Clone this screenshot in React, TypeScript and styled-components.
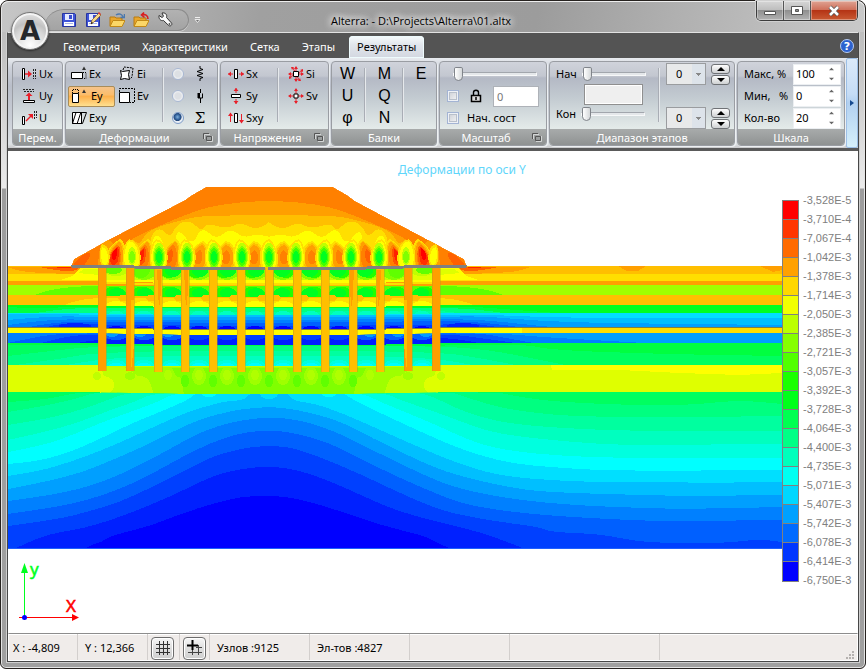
import React from "react";
import styled, { createGlobalStyle, css } from "styled-components";

const UI_FONT = `"Noto Sans", "Open Sans", sans-serif`;

const GlobalStyle = createGlobalStyle`
  *, *::before, *::after { box-sizing: border-box; }
  body { margin: 0; background: #fff; }
  button, input, select { font: inherit; color: inherit; margin: 0; }
`;

/* ---------- window frame ---------- */

const Frame = styled.div`
  display: flex;
  flex-direction: column;
  min-height: 100vh;
  border: 1px solid #26221f;
  border-radius: 8px 8px 6px 6px;
  box-shadow: inset 0 0 0 1px #e4e4e4;
  background: linear-gradient(
    180deg,
    #b9b9b9 0,
    #c4c4c4 60px,
    #d9d9d9 130px,
    #ebebeb 187px,
    #9d9d9d 188px,
    #a0a0a0 100%
  );
  font: 12px/16px ${UI_FONT};
  color: #000;
`;

const TitleBar = styled.header`
  position: relative;
  display: flex;
  align-items: flex-start;
  height: 31px;
  margin: 0 1px;
  border-top: 1px solid #eee;
  border-radius: 7px 7px 0 0;
  background: linear-gradient(100deg, #c6c6c6 0%, #b4b4b4 16%, #a0a0a0 30%, #9c9c9c 62%, #b0b0b0 78%, #c9c9c9 100%);
`;

const Orb = styled.button`
  position: absolute;
  left: 9px;
  top: 10px;
  z-index: 2;
  width: 38px;
  height: 38px;
  padding: 0;
  border: 1px solid #777;
  border-radius: 50%;
  background: radial-gradient(circle at 50% 90%, #fff 0, #d8d8d8 45%, #c2c2c2 60%, #f4f4f4 100%);
  box-shadow: inset 0 0 0 2px #f4f4f4, 0 1px 2px rgba(0, 0, 0, 0.5);
  svg { display: block; margin: auto; }
`;

const QuickAccess = styled.nav`
  display: flex;
  align-items: center;
  gap: 8px;
  height: 22px;
  margin: 7px 0 0 42px;
  padding: 0 15px 0 17px;
  border: 1px solid #8c8c8c;
  border-left: 0;
  border-radius: 20px 11px 11px 0;
  background: linear-gradient(180deg, #b2b2b2, #a3a3a3);
  box-shadow: 0 1px 0 #d4d4d4;
`;

const IconButton = styled.button`
  display: block;
  width: 16px;
  height: 16px;
  padding: 0;
  border: 0;
  background: none;
  svg { display: block; }
`;

const MoreButton = styled(IconButton)`
  margin: 11px 0 0 1px;
`;

const Title = styled.h1`
  position: absolute;
  left: 0;
  right: 24px;
  top: 11px;
  margin: 0;
  text-align: center;
  font: 400 11px/16px "Open Sans", sans-serif;
  text-shadow: 0 0 6px #fff, 0 0 8px #fff, 0 0 10px #eee;
  pointer-events: none;
`;

const WindowButtons = styled.div`
  display: flex;
  margin: -1px 6px 0 auto;
  border: 1px solid #3c3c3c;
  border-top: 0;
  border-radius: 0 0 5px 5px;
  overflow: hidden;
  box-shadow: 0 0 0 1px #d0d0d0;
`;

const WindowButton = styled.button<{ $close?: boolean }>`
  display: grid;
  place-items: center;
  width: ${(p) => (p.$close ? "46px" : "27px")};
  height: 19px;
  padding: 0;
  border: 0;
  border-right: ${(p) => (p.$close ? "0" : "1px solid #555")};
  box-shadow: inset 0 0 0 1px rgba(255, 255, 255, 0.35);
  background: ${(p) =>
    p.$close
      ? "linear-gradient(180deg, #dfa393 0, #cf6e58 48%, #b53415 50%, #c95a33 100%)"
      : "linear-gradient(180deg, #d6d6d6 0, #bdbdbd 48%, #8f8f8f 50%, #b2b2b2 100%)"};
`;

const Client = styled.main`
  display: flex;
  flex-direction: column;
  flex: 1;
  margin: 0 6px 6px;
  border: 1px solid #474747;
  border-top-color: #e2e2e2;
  background: #fff;
  box-shadow: 0 0 0 1px #cfcfcf;
`;

/* ---------- ribbon ---------- */

const TabRow = styled.nav`
  display: flex;
  align-items: flex-end;
  gap: 6px;
  height: 25px;
  padding: 0 3px 0 47px;
  background: #545454;
`;

const Tab = styled.button<{ $active?: boolean }>`
  height: 22px;
  padding: 0 8px;
  border: 0;
  border-radius: 4px 4px 0 0;
  font-size: 11px;
  line-height: 22px;
  white-space: nowrap;
  color: ${(p) => (p.$active ? "#000" : "#fff")};
  background: ${(p) => (p.$active ? "linear-gradient(180deg, #f6fbfc, #e1e6ec 40%, #d3d7e0)" : "none")};
  box-shadow: ${(p) => (p.$active ? "inset 0 0 0 1px #eefbfd" : "none")};
`;

const HelpButton = styled(IconButton)`
  margin: 0 0 4px auto;
`;

const Ribbon = styled.section`
  display: flex;
  height: 93px;
  border-bottom: 3px solid #5a5a5a;
  background: linear-gradient(180deg, #e8ebef 0, #cdd1da 10px, #b9bec9 28px, #c9ced6 60px, #dde1e4 86px, #c9c9cb 90px);
`;

const Groups = styled.div`
  display: flex;
  flex: 1;
  gap: 2px;
  min-width: 0;
  padding: 3px 0 2px 4px;
`;

const Group = styled.section<{ $w: number }>`
  display: flex;
  flex-direction: column;
  flex: 0 0 ${(p) => p.$w}px;
  border: 1px solid #9a9da3;
  border-radius: 4px;
  overflow: hidden;
  background: linear-gradient(180deg, #d0d3db 0, #c3c7d0 14px, #b4b9c5 16px, #c3cbd1 36px, #e3eae9 66px);
  box-shadow: 1px 1px 0 #edf0f2;
`;

const GroupBody = styled.div<{ $pad?: number }>`
  display: flex;
  flex: 1;
  padding: 1px 0 0 ${(p) => p.$pad ?? 0}px;
  font-size: 11px;
`;

const GroupLabel = styled.footer`
  display: flex;
  align-items: center;
  height: 16px;
  color: #fff;
  font-size: 11px;
  line-height: 15px;
  white-space: nowrap;
  background: linear-gradient(180deg, #a8abab, #8f9292);
  span { flex: 1; text-align: center; }
`;

const Launcher = styled(IconButton)`
  width: 14px;
  height: 12px;
`;

const Column = styled.div<{ $w: number; $pad?: number; $center?: boolean }>`
  display: grid;
  grid-template-rows: repeat(3, 22px);
  align-items: center;
  justify-items: ${(p) => (p.$center ? "center" : "start")};
  flex: 0 0 ${(p) => p.$w}px;
  padding-left: ${(p) => p.$pad ?? 0}px;
`;

const Divider = styled.i`
  flex: 0 0 1px;
  margin: 5px 0 7px;
  background: #e6e9ec;
  box-shadow: -1px 0 0 #a9adb5;
`;

const Tool = styled.button<{ $on?: boolean }>`
  display: flex;
  align-items: center;
  gap: 2px;
  height: 21px;
  padding: 0 3px 0 2px;
  border: 1px solid transparent;
  border-radius: 2px;
  background: none;
  white-space: nowrap;
  svg { display: block; flex: none; }
  ${(p) =>
    p.$on &&
    css`
      width: 47px;
      gap: 4px;
      border-color: #a98c58;
      background: linear-gradient(180deg, #f6c48a 0, #fbbd6c 40%, #fdb14d 50%, #ffe08f 100%);
    `}
`;

const Letter = styled.button`
  width: 26px;
  height: 20px;
  padding: 0;
  border: 0;
  background: none;
  font: 16px/20px "Liberation Sans", Arial, sans-serif;
`;

const Radio = styled.input`
  appearance: none;
  width: 12px;
  height: 12px;
  border: 1px solid #a9b8d3;
  border-radius: 50%;
  background: radial-gradient(circle, #dde0e4 40%, #f4f5f7 75%);
  &:checked {
    border-color: #7f9dc8;
    background: radial-gradient(circle at 45% 40%, #7fb0dc 0, #2b5a94 35%, #274a7c 45%, #e8eef5 55%);
  }
`;

const RadioLabel = styled.label`
  display: flex;
  align-items: center;
  gap: 8px;
  svg { display: block; }
`;

const Check = styled.input`
  appearance: none;
  width: 12px;
  height: 12px;
  border: 1px solid #a3b4d4;
  background: linear-gradient(135deg, #c9ccd3, #f6f7f8);
  box-shadow: inset 0 0 0 1px #eef1f6, inset 0 0 0 2px #b9c0cb;
`;

const Stack = styled.div`
  display: flex;
  flex-direction: column;
  flex: 1;
`;

const Row = styled.div<{ $h?: number; $gap?: number; $pad?: string }>`
  display: flex;
  align-items: center;
  gap: ${(p) => p.$gap ?? 0}px;
  height: ${(p) => p.$h ?? 22}px;
  padding: ${(p) => p.$pad ?? "0"};
  white-space: nowrap;
`;

const Slider = styled.input<{ $w: number }>`
  appearance: none;
  width: ${(p) => p.$w}px;
  height: 16px;
  background: none;
  &::-webkit-slider-runnable-track {
    height: 4px;
    border: 1px solid #f7f8f9;
    border-top-color: #a2a6ad;
    background: #e4e7ea;
  }
  &::-webkit-slider-thumb {
    appearance: none;
    width: 9px;
    height: 14px;
    margin-top: -6px;
    border: 1px solid #80848a;
    border-radius: 2px 2px 5px 5px;
    background: linear-gradient(90deg, #fff, #d5d8da);
  }
`;

const TextBox = styled.input<{ $w: number; $flat?: boolean }>`
  width: ${(p) => p.$w}px;
  height: 21px;
  padding: 0 3px;
  border: 1px solid ${(p) => (p.$flat ? "#8f8f8f" : "#aeb2b8")};
  box-shadow: ${(p) => (p.$flat ? "inset 0 0 0 1px #fff" : "none")};
  background: ${(p) => (p.$flat ? "#efefef" : "#fff")};
  color: #777;
`;

const StageSelect = styled.select`
  appearance: none;
  width: 40px;
  height: 22px;
  padding: 0 0 0 9px;
  border: 1px solid #9a9c9f;
  border-radius: 0;
  color: #000;
  background:
    conic-gradient(from -45deg at 50% 100%, #888 90deg, transparent 0) right 4px top 9px / 6px 3px no-repeat,
    linear-gradient(90deg, #e8e9ea 25px, #dde3ea 25px);
`;

const Steps = styled.div`
  display: grid;
  gap: 1px;
`;

const Step = styled.button`
  display: grid;
  place-items: center;
  width: 19px;
  height: 10px;
  padding: 0;
  border: 1px solid #6f7276;
  border-radius: 3px;
  background: linear-gradient(180deg, #fdfdfd, #cfd1d3);
  svg { display: block; }
`;

const StageSteppers = styled.div`
  display: flex;
  flex-direction: column;
  justify-content: space-between;
  flex: 0 0 68px;
  height: 66px;
`;

const Spin = styled.span`
  display: flex;
  width: 48px;
  height: 21px;
  border: 1px solid #eceff2;
  background: #fff;
  input {
    width: 32px;
    height: 18px;
    padding: 0 0 0 2px;
    border: 0;
    background: none;
  }
`;

const SpinArrows = styled.span`
  display: grid;
  align-content: space-around;
  button {
    display: block;
    width: 11px;
    height: 8px;
    padding: 0;
    border: 0;
    background: none;
  }
  svg { display: block; margin: auto; }
`;

const ScaleRow = styled.label`
  display: flex;
  align-items: center;
  justify-content: space-between;
  height: 22px;
  padding: 0 3px 0 6px;
  white-space: pre;
`;

const Overflow = styled.button`
  width: 12px;
  height: 90px;
  padding: 0;
  border: 1px solid #9dbfe6;
  border-radius: 2px;
  background: linear-gradient(180deg, #dbeafa 0, #c5dcf5 40%, #b2d0f0 50%, #d6f0fb 100%);
  svg { display: block; margin: auto; }
`;

/* ---------- canvas ---------- */

const Canvas = styled.section`
  display: grid;
  grid-template: 36px auto 1fr / minmax(0, 1fr) 76px;
  flex: 1;
  background: #fff;
`;

const PlotTitle = styled.h2`
  grid-column: 1 / -1;
  margin: 0;
  padding: 10px 0 0 58px;
  text-align: center;
  font: 400 12px/18px ${UI_FONT};
  color: #5fd6fb;
`;

const Plot = styled.svg`
  display: block;
  width: 100%;
  height: auto;
`;

const Legend = styled.aside`
  display: flex;
  gap: 4px;
  grid-row: 2 / 4;
  grid-column: 2;
`;

const Swatches = styled.div`
  display: flex;
  flex-direction: column;
  align-self: flex-start;
  width: 17px;
  margin-top: 13px;
  border: 1px solid #808080;
`;

const Swatch = styled.i<{ $c: string }>`
  height: 19px;
  background: ${(p) => p.$c};
  border-bottom: 1px solid #808080;
  &:last-child { border-bottom: 0; }
`;

const Values = styled.ol`
  margin: 4px 0 0;
  padding: 0;
  list-style: none;
  font: 11px/19px "Liberation Sans", Arial, sans-serif;
  color: #808080;
`;

const Axes = styled.svg`
  display: block;
  align-self: end;
  margin: 0 0 4px 8px;
  font: 17px ${UI_FONT};
`;

/* ---------- status bar ---------- */

const StatusBar = styled.footer`
  display: flex;
  align-items: stretch;
  height: 28px;
  border: 1px solid #fff;
  border-top-color: #8d8d8d;
  background: #f0ecea;
  box-shadow: inset 0 1px 0 #fff;
  font: 11px/26px ${UI_FONT};
`;

const Cell = styled.div<{ $w?: number; $pad?: number }>`
  display: flex;
  align-items: center;
  flex: ${(p) => (p.$w ? `0 0 ${p.$w}px` : "1")};
  padding: 2px 0 0 ${(p) => p.$pad ?? 4}px;
  border-right: ${(p) => (p.$w ? "1px solid #d3cfcd" : "0")};
  white-space: nowrap;
`;

const StatusButton = styled.button`
  display: grid;
  place-items: center;
  width: 23px;
  height: 23px;
  padding: 0;
  border: 1px solid #6c6c6c;
  border-radius: 4px;
  background: linear-gradient(180deg, #f7f7f7, #dedede 50%, #cfcfcf);
  box-shadow: inset 0 0 0 1px #fff;
`;

const Grip = styled.svg`
  margin: 0 3px 1px auto;
  align-self: flex-end;
`;

/* ---------- small icons ---------- */

const Pic = ({ w = 16, h = 16, children }: { w?: number; h?: number; children: React.ReactNode }) => (
  <svg width={w} height={h} viewBox={`0 0 ${w} ${h}`} fill="none" aria-hidden="true">
    {children}
  </svg>
);

const Floppy = ({ pencil }: { pencil?: boolean }) => (
  <Pic>
    <path d="M1.500 1.500h12l1 1v12h-13z" fill="#3f55d8" stroke="#2735a0" />
    <path d="M4 2h8v6H4z" fill="#e4e9ff" />
    <path d="M8 3h3v4H8z" fill="#3b4fd0" />
    <path d="M3 10h10v4H3z" fill="#fff" />
    <path d="M4 11.500h8" stroke="#a9b4e8" />
    {pencil && (
      <>
        <path d="M6 12l1-4 7-7 2 2-7 7z" fill="#f5d98c" stroke="#8a5a20" strokeWidth=".7" />
        <path d="M13 1l2 2 1-1-2-2z" fill="#d33" />
        <path d="M6 12l.5-2 1.500 1z" fill="#000" />
      </>
    )}
  </Pic>
);

const Folder = ({ arrow }: { arrow: string }) => (
  <Pic>
    <path d="M1 14V5h5l1 1h6v3" fill="#e9a62c" stroke="#b87a10" />
    <path d="M1 14.500l3-6h12l-3 6z" fill="#fbd768" stroke="#c28a18" />
    {arrow === "blue" ? (
      <path d="M7 3c3-2 6-1 7 2m1.500-3v3.500h-4" stroke="#4b78ad" strokeWidth="1.500" />
    ) : (
      <path d="M15 7c0-4-3-5-6-4m2-2.500L8.500 3l3 2.500" stroke="#d81f1f" strokeWidth="1.600" />
    )}
  </Pic>
);

const Wrench = () => (
  <Pic>
    <path
      d="M2 3.500l3 2 1.500-1.200L5 1c3-.6 5.500 1.400 4.500 4.500l5 5.500c1.200 1.600-1 3.800-2.800 2.500L6.500 8.500C3.500 9.300 1.500 6.500 2 3.500z"
      fill="#fafafa"
      stroke="#333"
    />
    <circle cx="12.500" cy="12" r="1" fill="#555" />
  </Pic>
);

const R = "#e8202a";
const hatch = { stroke: "#222", strokeDasharray: "2 1" };

const icons: Record<string, React.ReactNode> = {
  Ux: (
    <Pic>
      <path d="M1.500 2.500h2v11h-2z" stroke="#000" fill="#fff" />
      <path d="M4 8h5" stroke={R} strokeWidth="1.500" />
      <path d="M7 4.500l4 3.500-4 3.500z" fill={R} />
      <path d="M12.500 3v10M14.500 3v10" {...hatch} />
    </Pic>
  ),
  Uy: (
    <Pic>
      <path d="M2 1.500h12M3 3.500h10" {...hatch} />
      <path d="M8 7v5" stroke={R} strokeWidth="2" />
      <path d="M4.500 8L8 4.500 11.500 8z" fill={R} />
      <path d="M2.500 12.500h11v2h-11z" stroke="#000" fill="#fff" />
    </Pic>
  ),
  U: (
    <Pic>
      <path d="M1.500 6.500h2v8h-2z" stroke="#000" fill="#fff" />
      <path d="M5 11l5-5" stroke={R} strokeWidth="1.500" />
      <path d="M7 4h5v5z" fill={R} />
      <path d="M13.500 1v8M15.500 1v7" {...hatch} />
    </Pic>
  ),
  Ex: (
    <Pic>
      <path d="M.5 6.500h11v6H.5z" stroke="#000" fill="#fff" />
      <path d="M12 6.500h3v6h-3" stroke="#000" strokeDasharray="1 1" />
      <path d="M11 4h4l-2-3.500z" fill="#333" />
    </Pic>
  ),
  Ey: (
    <Pic>
      <path d="M1.500 5.500h6v9h-6z" stroke="#000" fill="#fff" />
      <path d="M1.500 5V1.500h6V5" stroke="#000" strokeDasharray="1 1" />
      <path d="M11 5h4l-2-3.500z" fill="#333" />
    </Pic>
  ),
  Exy: (
    <Pic>
      <path d="M1.500 2.500h9v11h-9z" stroke="#000" fill="#fff" />
      <path d="M5 2.500h10.500l-4 11H1.500zM10 2l-4 12" stroke="#000" />
    </Pic>
  ),
  Ei: (
    <Pic>
      <path d="M1.500 4.500l2 1 7-1-1 4 1 5-5-1-4 1 1-4z" stroke="#000" fill="#fff" />
      <path d="M4 4l1-3 9 1-1 9-2 2" stroke="#000" strokeDasharray="2 1" />
    </Pic>
  ),
  Ev: (
    <Pic>
      <path d="M.5 4.500h10v10H.5z" stroke="#000" fill="#fff" />
      <path d="M.5 4V.500h15v14H11" stroke="#000" strokeDasharray="2 1" />
    </Pic>
  ),
  Sx: (
    <Pic>
      <path d="M6.500 3.500h3v9h-3z" stroke="#000" fill="#fff" />
      <path d="M0 8h5M11 8h5" stroke={R} />
      <path d="M0 8l3-2.500v5zM16 8l-3-2.500v5z" fill={R} />
    </Pic>
  ),
  Sy: (
    <Pic>
      <path d="M3.500 6.500h9v3h-9z" stroke="#000" fill="#fff" />
      <path d="M8 0v5M8 11v5" stroke={R} />
      <path d="M8 0l2.500 3h-5zM8 16l2.500-3h-5z" fill={R} />
    </Pic>
  ),
  Sxy: (
    <Pic>
      <path d="M6.500 3.500h3v9h-3z" stroke="#000" fill="#fff" />
      <path d="M2.500 3v9M13.500 4v9" stroke={R} />
      <path d="M0 6l2.500-3.500L5 6zM11 10l2.500 3.500L16 10z" fill={R} />
    </Pic>
  ),
  Si: (
    <Pic>
      <path d="M8 1v5M8 10v5M1 8h5M10 8h5M5 2l2 4M11 14l-2-4M2 11l4-2M14 5l-4 2" stroke={R} />
      <path d="M8 0l2 3H6zM8 16l2-3H6zM0 8l3-2v4zM16 8l-3-2v4zM3 1h3L4 4zM13 15h-3l2-3zM1 13v-3l3 2zM15 3v3l-3-2z" fill={R} />
      <path d="M5.500 5.500h5v5h-5z" stroke="#000" fill="#fff" />
    </Pic>
  ),
  Sv: (
    <Pic>
      <path d="M8 1v5M8 10v5M1 8h5M10 8h5" stroke={R} />
      <path d="M8 0l2 3H6zM8 16l2-3H6zM0 8l3-2v4zM16 8l-3-2v4z" fill={R} />
      <path d="M6 6h4v4H6z" stroke="#000" fill="#fff" />
    </Pic>
  ),
  spring: (
    <Pic>
      <path d="M8 0v2.500l3 1-6 2 6 2-6 2 6 2-3 1V15" stroke="#000" />
    </Pic>
  ),
  damper: (
    <Pic>
      <path d="M8.500 1v4M6 5v5h4.500V5.500M8.500 10v5" stroke="#000" />
      <path d="M6 5h2v5H6z" fill="#000" />
    </Pic>
  ),
  sum: (
    <Pic h={20}>
      <text x="8" y="15" textAnchor="middle" fontFamily="DejaVu Serif, serif" fontSize="15" fill="#000">Σ</text>
    </Pic>
  ),
};

const LauncherButton = () => (
  <Launcher aria-label="Параметры">
    <Pic w={10} h={12}>
      <path d="M.5 8V2.500H6M3.500 5.500h5v4h-5z" stroke="#555" />
      <path d="M1.500 8V3.500H7M9.500 5v5.500H4" stroke="#d4d6d6" />
    </Pic>
  </Launcher>
);

const Tri = ({ down, w = 7 }: { down?: boolean; w?: number }) => (
  <svg width={w} height="4" viewBox="0 0 8 4" aria-hidden="true">
    <path d={down ? "M0 0h8L4 4z" : "M0 4h8L4 0z"} fill={w > 6 ? "#000" : "#666"} />
  </svg>
);

const ToolButton = ({ id, on }: { id: string; on?: boolean }) => (
  <Tool $on={on} aria-pressed={!!on}>
    {icons[id]}
    {id}
  </Tool>
);

const StageStepper = ({ label }: { label: string }) => (
  <Row $gap={5}>
    <StageSelect aria-label={label} defaultValue="0">
      <option>0</option>
    </StageSelect>
    <Steps>
      <Step aria-label="Больше"><Tri w={8} /></Step>
      <Step aria-label="Меньше"><Tri down w={8} /></Step>
    </Steps>
  </Row>
);

const ScaleField = ({ label, value }: { label: string; value: string }) => (
  <ScaleRow>
    {label}
    <Spin>
      <input defaultValue={value} />
      <SpinArrows>
        <button aria-label="Больше"><Tri w={5} /></button>
        <button aria-label="Меньше"><Tri down w={5} /></button>
      </SpinArrows>
    </Spin>
  </ScaleRow>
);

/* ---------- contour plot ---------- */

type Pt = [number, number];

const toPoints = (s: string): Pt[] => s.split(" ").map((p) => p.split(",").map(Number) as Pt);

const smooth = (pts: Pt[]) => {
  let d = `M${pts[0]}`;
  for (let i = 1; i < pts.length - 1; i++) {
    const [x, y] = pts[i];
    const [nx, ny] = pts[i + 1];
    d += `Q${x},${y} ${(x + nx) / 2},${(y + ny) / 2}`;
  }
  return `${d}L${pts[pts.length - 1]}`;
};

/** Area under a smooth contour, closed at the given depth. */
const Under = ({ c, p, to = 549 }: { c: string; p: string; to?: number }) => {
  const pts = toPoints(p);
  return <path d={`${smooth(pts)}V${to}H${pts[0][0]}Z`} fill={c} />;
};

/** Soil layer top with the settlement below the embankment. */
const Stratum = ({ y, c, sag = 2 }: { y: number; c: string; sag?: number }) => (
  <path
    d={`M8,${y}H75L125,${y + sag / 2}L180,${y + sag}H358L413,${y + sag / 2}L463,${y}H782V549H8Z`}
    fill={c}
  />
);

const Mirror = ({ children }: { children: React.ReactNode }) => (
  <>
    <g>{children}</g>
    <g transform="translate(538 0) scale(-1 1)">{children}</g>
  </>
);

const Drop = ({ x, y, rx, ry, c, lean = 0 }: { x: number; y: number; rx: number; ry: number; c: string; lean?: number }) => (
  <path
    d={`M${x + lean},${y - ry}C${x + rx},${y - ry * 0.9} ${x + rx * 1.2},${y + ry} ${x},${y + ry}C${x - rx * 1.2},${y + ry} ${x - rx},${y - ry * 0.5} ${x + lean},${y - ry}Z`}
    fill={c}
  />
);

const Blob = ({ x, y, rx, ry, c }: { x: number; y: number; rx: number; ry: number; c: string }) => (
  <ellipse cx={x} cy={y} rx={rx} ry={ry} fill={c} />
);

const PILES = [102, 130, 158, 185, 213, 241];
const GAPS = [116, 144, 172, 199, 227, 255];

const DEEP: [string, string][] = [
  ["#00ff80", "8,402 40,400 62,396 80,392 269,392 495,392 510,395 540,400 580,403 630,405 690,405 730,401 750,401 782,404"],
  ["#00ff9f", "8,412 33,408 67,401 85,396 97,392 269,392 450,392 460,395 487,404 513,410 563,416 630,417 700,417 782,416"],
  ["#00ffbf", "8,425 40,420 70,413 95,405 115,397 132,392 269,392 410,392 430,395 453,407 480,417 517,425 597,430 663,431 782,431"],
  ["#00ffdf", "8,440 45,432 80,422 110,410 135,402 155,392 269,392 383,392 400,400 430,410 457,420 490,432 530,438 597,444 640,445 782,444"],
  ["#00ffff", "8,452 45,445 75,434 100,423 130,412 160,401 177,392 269,392 361,392 380,402 430,422 475,443 510,451 563,456 620,458 782,458"],
  ["#00dfff", "8,464 33,462 65,454 100,439 130,424 160,412 190,399 196,392 269,392 342,392 350,398 380,413 430,436 463,450 507,463 560,468 620,471 782,470"],
  ["#00bfff", "8,476 40,471 70,462 100,451 130,438 160,424 190,411 215,404 228,401 245,400 251,392 269,392 287,392 293,401 313,403 347,415 380,430 430,452 460,464 500,476 560,481 640,483 670,481 685,483 782,482"],
  ["#009fff", "8,489 40,483 80,473 110,461 140,448 170,433 200,419 235,410 255,408 269,407 283,408 303,411 340,421 370,437 430,466 463,477 503,486 540,492 640,495 690,496 782,495"],
  ["#0080ff", "8,501 45,496 80,489 110,479 140,465 170,449 200,432 235,421 269,417 300,420 335,431 370,449 430,478 460,489 510,499 570,505 640,508 690,509 782,507"],
  ["#0060ff", "8,514 50,508 85,501 120,489 150,475 180,458 210,443 240,433 269,430 295,433 330,443 365,461 400,478 430,491 465,505 520,513 570,517 650,521 690,521 782,520"],
  ["#0040ff", "8,526 60,519 90,511 120,502 150,488 180,473 215,455 250,447 269,446 290,447 320,457 360,474 400,493 430,506 455,514 500,522 540,527 550,532 600,534 635,541 665,543 720,543 745,541 757,539 782,542"],
  ["#0020ff", "14,549 35,539 55,533 85,528 120,517 160,501 190,487 215,475 240,469 269,466 298,470 330,481 365,497 395,510 430,520 480,532 510,543 525,549"],
  ["#0000ff", "85,549 92,544 100,543 110,536 150,526 180,514 215,503 240,497 269,495 300,499 340,511 380,525 425,536 437,543 452,549"],
];

const BANK = "M71,267L74,259L110,239L185,200L192,195L206,187H333L347,195L355,201L464,259L467,267Z";

const Embankment = () => (
  <g clipPath="url(#bank)">
    <path d={BANK} fill="#ff8000" />
    <Mirror>
      <Under c="#ff6000" p="71,268 80,255 92,252 88,260 82,268" to={268} />
      <Under c="#ff9f00" to={269} p="98,268 99,243 108,238 119,250 130,241 137,236 157,227 180,217 207,207 240,202 270,201" />
      <Under c="#ffbf00" to={269} p="101,269 103,250 107,244 112,262 118,269 124,246 133,238 139,246 147,231 173,222 200,216 220,216 240,215 270,215" />
      <Under c="#ffdf00" to={269} p="125,269 127,244 133,240 140,262 147,269 150,236 160,227 170,238 177,224 190,220 202,232 206,223 228,229 240,222 256,230 270,222" />
      <Under c="#ffff00" to={269} p="151,269 150,241 160,232 168,262 174,269 175,236 180,230 192,246 202,226 216,240 230,228 244,238 256,234 270,237" />
      {GAPS.map((x, i) => (
        <g key={x}>
          <Drop x={x - 1} y={257} rx={13} ry={i > 2 ? 16 : 18} lean={i < 4 ? 5 : 0} c="#ffdf00" />
          <Drop x={x - 1} y={257} rx={11} ry={i > 2 ? 14 : 16} lean={i < 4 ? 4 : 0} c="#ffbf00" />
          <Drop x={x - 1} y={257} rx={9} ry={i > 2 ? 12 : 15} lean={i < 4 ? 4 : 0} c="#ff9f00" />
          <Drop x={x - 1} y={257} rx={i > 2 ? 5 : 7} ry={i > 2 ? 7 : 12} lean={i < 4 ? 2 : 0} c="#ff8000" />
        </g>
      ))}
      <Drop x={114} y={257} rx={7} ry={11} lean={5} c="#ff6000" />
      <Drop x={114} y={256} rx={5} ry={9} lean={4} c="#ff3000" />
      <Drop x={114} y={254} rx={3} ry={6} lean={3} c="#ff0000" />
      <Drop x={141} y={256} rx={5} ry={9} lean={4} c="#ff5000" />
      <Drop x={141} y={255} rx={3} ry={6} lean={3} c="#ff2000" />
      <Drop x={169} y={256} rx={4} ry={7} lean={3} c="#ff6000" />
      {[105, 132, 159, 187, 214, 242, 269].map((x, i) => (
        <g key={x}>
          <Drop x={x} y={255} rx={i ? 11 : 6} ry={i ? 16 : 11} lean={i < 6 ? -3 : 0} c="#ffdf00" />
          <Drop x={x} y={256} rx={i ? 9 : 4} ry={i ? 15 : 9} lean={i < 6 ? -3 : 0} c="#ffff00" />
          {i > 0 && <Blob x={x} y={256} rx={i > 1 ? 6 : 4} ry={i > 1 ? 13 : 9} c="#bfff00" />}
          {i > 0 && <Blob x={x} y={257} rx={i > 1 ? 5 : 3} ry={i > 1 ? 11 : 6} c="#80ff00" />}
          {i > 1 && <Blob x={x} y={257} rx={4} ry={9} c="#40ff00" />}
          {i > 1 && <Blob x={x} y={257} rx={3} ry={6} c="#00ff20" />}
        </g>
      ))}
    </Mirror>
  </g>
);

const Soil = () => (
  <g>
    <Stratum y={266} c="#ffbf00" sag={0} />
    <Mirror>
      <Under c="#ff9f00" to={267} p="8,267 20,272 50,273 80,275 98,267" />
      <Under c="#ff6000" to={267} p="40,267 58,271 75,271 80,267" />
      <Under c="#ff2000" to={267} p="54,267 66,269 72,267" />
    </Mirror>
    <path d="M618,266H646L638,271H627ZM760,266H782V270L773,272Z" fill="#ff9f00" />
    <Stratum y={274} c="#ffdf00" sag={0} />
    <Mirror>
      <path d="M72,276L80,268H99V280H60Z" fill="#ffff00" />
      <path d="M78,273L84,269H99V275Z" fill="#dfff00" />
      {GAPS.map((x, i) => (
        <g key={x}>
          <rect x={x - 14} y="267" width="28" height="16" fill={i ? "#bfff00" : "#dfff00"} />
          <Blob x={x} y={270} rx={13} ry={i ? 10 : 6} c={i ? "#80ff00" : "#bfff00"} />
          <Blob x={x - 3} y={270} rx={9} ry={i ? 8 : 4} c={i > 1 ? "#20ff00" : "#60ff00"} />
          {i > 1 && <Blob x={x + 1} y={271} rx={8} ry={6} c="#00ff20" />}
          <rect x={x - 14} y="280" width="28" height="4" fill="#ffff00" />
        </g>
      ))}
    </Mirror>
    <Stratum y={281} c="#ff9f00" sag={2} />
    <Mirror>
      <path d="M98,282L170,283H270V285H160L98,284Z" fill="#ffdf00" />
      <path d="M160,285H270V287H160Z" fill="#ffbf00" />
    </Mirror>
    <Stratum y={285} c="#9fff00" />
    <Mirror>
      <path d="M30,297C45,290 65,286 99,286V298Z" fill="#60ff00" />
      {GAPS.map((x) => (
        <g key={x}>
          <rect x={x - 14} y="286" width="28" height="12" fill="#60ff00" />
          <Blob x={x - 2} y={294} rx={12} ry={7} c="#20ff00" />
          <Blob x={x + 1} y={293} rx={8} ry={5} c="#00ff20" />
        </g>
      ))}
    </Mirror>
    <Stratum y={295} c="#ffbf00" />
    <Mirror>
      <path d="M62,306C75,300 85,299 99,298V308Z" fill="#ffdf00" />
      {GAPS.map((x) => (
        <g key={x}>
          <rect x={x - 14} y="298" width="28" height="10" fill="#ffdf00" />
          <Blob x={x} y={307} rx={11} ry={6} c="#ffff00" />
          <Blob x={x + 7} y={298} rx={5} ry={3} c="#ffbf00" />
        </g>
      ))}
    </Mirror>
    <Stratum y={305} c="#00ff20" />
    <Under c="#00ff40" to={317} p="8,307 40,309 75,306 98,308 269,308 440,308 463,306 490,308 530,311 570,314" />
    <Under c="#00ff80" to={317} p="30,314 60,309 90,308 269,308 440,308 475,309 510,314" />
    <Under c="#00ff9f" to={317} p="85,316 100,310 160,311 269,312 370,311 440,310 475,316" />
    <Mirror>
      {GAPS.map((x) => <Blob key={x} x={x} y={315} rx={8} ry={4} c="#00ffbf" />)}
    </Mirror>
    <Stratum y={313} c="#00dfff" />
    <Under c="#00bfff" to={331} p="8,314 60,314 98,315 269,315 440,315 500,315 560,318 782,318" />
    <Under c="#009fff" to={331} p="8,320 50,316 98,317 269,317 440,317 480,316 540,321 600,323 782,325" />
    <Under c="#0080ff" to={331} p="8,325 50,319 98,320 269,320 440,319 485,320 540,326 575,329" />
    <Under c="#0060ff" to={331} p="20,329 50,322 98,322 269,323 440,321 480,322 535,329" />
    <Under c="#0040ff" to={331} p="40,329 62,322 98,325 269,326 440,325 475,323 507,329" />
    <Mirror>
      <Blob x={75} y={326} rx={16} ry={3} c="#0020ff" />
      {GAPS.map((x) => <Blob key={x} x={x} y={330} rx={9} ry={4} c="#0000ff" />)}
    </Mirror>
    <Stratum y={327} c="#808040" />
    <Stratum y={328} c="#ffff00" />
    <path d="M522,328H782V333H522Z" fill="#ffdf00" />
    <Stratum y={333} c="#009fff" />
    <clipPath id="lens"><path d="M8,333H75L125,334L180,335H358L413,334L463,333H782V346H8Z" /></clipPath>
    <g clipPath="url(#lens)">
      <Under c="#0080ff" to={346} p="8,333 269,333 498,333 540,337 610,341 680,345" />
      <Under c="#0060ff" to={346} p="8,343 35,337 65,333 269,333 480,333 500,337 545,345" />
      <Under c="#0040ff" to={346} p="35,345 60,337 95,334 269,334 450,334 480,338 530,345" />
      <Under c="#0020ff" to={346} p="70,345 95,337 269,336 440,336 490,345" />
      <Mirror>
        {GAPS.map((x, i) => (
          <g key={x}>
            <Blob x={x} y={336} rx={11} ry={4} c={i < 3 ? "#0060ff" : "#0040ff"} />
            {i < 3 && <Blob x={x - 4} y={334} rx={6} ry={3} c="#009fff" />}
          </g>
        ))}
      </Mirror>
    </g>
    <Stratum y={343} c="#00ff40" />
    <Under c="#00ff60" to={368} p="8,345 50,344 98,346 440,346 525,344 550,350 660,354 782,356" />
    <Under c="#00ff80" to={368} p="8,356 50,351 98,346 269,346 440,346 490,350 530,358 570,366" />
    <Under c="#00ff9f" to={368} p="8,366 60,359 98,352 269,350 440,352 480,358 520,366" />
    <Under c="#00ffbf" to={368} p="60,366 98,359 160,356 269,356 378,356 440,359 478,366" />
    <Mirror>
      {GAPS.map((x) => (
        <g key={x}>
          <Blob x={x} y={367} rx={11} ry={7} c="#00ffdf" />
          <Blob x={x} y={367} rx={8} ry={4} c="#00ffff" />
        </g>
      ))}
    </Mirror>
    <Stratum y={365} c="#dfff00" />
    <path d="M551,365H782V373L740,375L680,373L620,370H552Z" fill="#ffff00" />
    <Mirror>
      <path d="M100,366H270V394H108C118,388 116,378 104,376Z" fill="#bfff00" />
      <path d="M124,367H270V394H154C150,386 152,376 138,376Z" fill="#9fff00" />
      <path d="M172,368H270V394H184C182,388 186,378 176,376Z" fill="#80ff00" />
      <Blob x={97} y={376} rx={4} ry={4} c="#bfff00" />
      <Blob x={130} y={376} rx={5} ry={4} c="#9fff00" />
      {[168, 199, 227, 255].map((x) => (
        <g key={x}>
          <Blob x={x} y={376} rx={7} ry={9} c="#9fff00" />
          <Blob x={x} y={375} rx={4} ry={5} c="#b0ff00" />
        </g>
      ))}
      {[185, 213, 241, 269].map((x) => <Blob key={x} x={x} y={381} rx={4} ry={6} c="#60ff00" />)}
    </Mirror>
    <Stratum y={392} c="#00ff60" />
    <clipPath id="deep"><path d="M8,392H75L130,393L180,394H358L413,393L463,392L640,391H782V549H8Z" /></clipPath>
    <g clipPath="url(#deep)">
      {DEEP.map(([c, p]) => <Under key={c} c={c} p={p} />)}
      <Blob x={209} y={394} rx={7} ry={3} c="#00ffff" />
      <Blob x={329} y={394} rx={7} ry={3} c="#00ffff" />
      <Blob x={269} y={394} rx={9} ry={5} c="#00dfff" />
    </g>
    <path d="M8,548.500H782" stroke="#2060ff" />
  </g>
);

const Piles = () => (
  <Mirror>
    {[...PILES, 269].map((x, i) => (
      <g key={x}>
        <rect x={x - 4} y="267" width="8" height={i < 2 ? 104 : 105} fill={i < 2 ? "#ff9f00" : "#ffbf00"} />
        <path d={`M${x - 4},268V${i < 2 ? 371 : 372}M${x + 4},268V${i < 2 ? 371 : 372}`} stroke="#c09820" strokeOpacity=".45" />
        {i === 1 && <path d={`M${x + 1},300H${x + 4}V345L${x + 1},371Z`} fill="#ffbf00" />}
        {(i === 2 || i === 3) && <path d={`M${x - 1},270H${x + 3}V292L${x + 1},310Z`} fill="#ff9f00" />}
      </g>
    ))}
    <path d="M71,266L134,267L190,268.500H270" stroke="#808080" strokeWidth="3" fill="none" />
  </Mirror>
);

const ContourPlot = () => (
  <Plot viewBox="8 187 774 362" shapeRendering="crispEdges" role="img" aria-label="Деформации по оси Y">
    <clipPath id="bank"><path d={BANK} /></clipPath>
    <Soil />
    <Embankment />
    <Piles />
  </Plot>
);

const SCALE_COLORS = [
  "#ff0000", "#ff3600", "#ff6b00", "#ffa100", "#ffd700", "#f2ff00", "#bcff00", "#86ff00", "#51ff00", "#1bff00",
  "#00ff1b", "#00ff51", "#00ff86", "#00ffbc", "#00fff2", "#00d7ff", "#00a1ff", "#006bff", "#0036ff", "#0000ff",
];

const SCALE_VALUES = [
  "-3,528E-5", "-3,710E-4", "-7,067E-4", "-1,042E-3", "-1,378E-3", "-1,714E-3", "-2,050E-3", "-2,385E-3",
  "-2,721E-3", "-3,057E-3", "-3,392E-3", "-3,728E-3", "-4,064E-3", "-4,400E-3", "-4,735E-3", "-5,071E-3",
  "-5,407E-3", "-5,742E-3", "-6,078E-3", "-6,414E-3", "-6,750E-3",
];

export default function App() {
  return (
    <>
      <GlobalStyle />
      <Frame>
        <TitleBar>
          <Orb aria-label="Меню">
            <svg width="34" height="34" viewBox="0 0 34 34" aria-hidden="true">
              <text x="17" y="26" textAnchor="middle" fontFamily="DejaVu Sans, sans-serif" fontWeight="700" fontSize="26" fill="#25282b">A</text>
            </svg>
          </Orb>
          <QuickAccess aria-label="Быстрый доступ">
            <IconButton aria-label="Сохранить"><Floppy /></IconButton>
            <IconButton aria-label="Сохранить как"><Floppy pencil /></IconButton>
            <IconButton aria-label="Открыть"><Folder arrow="blue" /></IconButton>
            <IconButton aria-label="Вернуть"><Folder arrow="red" /></IconButton>
            <IconButton aria-label="Настройки"><Wrench /></IconButton>
          </QuickAccess>
          <MoreButton aria-label="Настроить панель">
            <Pic>
              <path d="M5 4.500h5" stroke="#eee" />
              <path d="M5 6.500h5l-2.500 3z" stroke="#e8e8e8" fill="#777" />
            </Pic>
          </MoreButton>
          <Title>Alterra: - D:\Projects\Alterra\01.altx</Title>
          <WindowButtons>
            <WindowButton aria-label="Свернуть">
              <Pic w={14} h={12}><path d="M1.500 6.500h11v3h-11z" fill="#fff" stroke="#555" /></Pic>
            </WindowButton>
            <WindowButton aria-label="Развернуть">
              <Pic w={14} h={12}><path d="M1.500 1.500h11v8h-11zM5.500 4.500h3v2h-3z" fill="#fff" fillRule="evenodd" stroke="#555" /></Pic>
            </WindowButton>
            <WindowButton $close aria-label="Закрыть">
              <Pic w={14} h={12}>
                <path d="M3 2l8 8M11 2l-8 8" stroke="#555" strokeWidth="4" />
                <path d="M3 2l8 8M11 2l-8 8" stroke="#fff" strokeWidth="2.500" />
              </Pic>
            </WindowButton>
          </WindowButtons>
        </TitleBar>

        <Client>
          <TabRow>
            <Tab>Геометрия</Tab>
            <Tab>Характеристики</Tab>
            <Tab>Сетка</Tab>
            <Tab>Этапы</Tab>
            <Tab $active>Результаты</Tab>
            <HelpButton aria-label="Справка">
              <Pic>
                <circle cx="8" cy="8" r="6.500" fill="#2c62cf" stroke="#b7ccf2" />
                <text x="8" y="12" textAnchor="middle" fontFamily="DejaVu Sans, sans-serif" fontWeight="700" fontSize="11" fill="#fff">?</text>
              </Pic>
            </HelpButton>
          </TabRow>

          <Ribbon>
            <Groups>
              <Group $w={51}>
                <GroupBody $pad={5}>
                  <Column $w={44}>
                    <ToolButton id="Ux" />
                    <ToolButton id="Uy" />
                    <ToolButton id="U" />
                  </Column>
                </GroupBody>
                <GroupLabel><span>Перем.</span></GroupLabel>
              </Group>

              <Group $w={153}>
                <GroupBody $pad={2}>
                  <Column $w={48}>
                    <ToolButton id="Ex" />
                    <ToolButton id="Ey" on />
                    <ToolButton id="Exy" />
                  </Column>
                  <Column $w={47}>
                    <ToolButton id="Ei" />
                    <ToolButton id="Ev" />
                  </Column>
                  <Divider />
                  <Column $w={52} $center>
                    {["spring", "damper", "sum"].map((n) => (
                      <RadioLabel key={n}>
                        <Radio type="radio" name="part" aria-label={n} defaultChecked={n === "sum"} />
                        {icons[n]}
                      </RadioLabel>
                    ))}
                  </Column>
                </GroupBody>
                <GroupLabel><span>Деформации</span><LauncherButton /></GroupLabel>
              </Group>

              <Group $w={109}>
                <GroupBody $pad={4}>
                  <Column $w={53}>
                    <ToolButton id="Sx" />
                    <ToolButton id="Sy" />
                    <ToolButton id="Sxy" />
                  </Column>
                  <Divider />
                  <Column $w={48} $pad={6}>
                    <ToolButton id="Si" />
                    <ToolButton id="Sv" />
                  </Column>
                </GroupBody>
                <GroupLabel><span>Напряжения</span><LauncherButton /></GroupLabel>
              </Group>

              <Group $w={106}>
                <GroupBody>
                  <Column $w={31} $center><Letter>W</Letter><Letter>U</Letter><Letter>φ</Letter></Column>
                  <Column $w={2} />
                  <Divider />
                  <Column $w={37} $center><Letter>M</Letter><Letter>Q</Letter><Letter>N</Letter></Column>
                  <Divider />
                  <Column $w={34} $center><Letter>E</Letter></Column>
                </GroupBody>
                <GroupLabel><span>Балки</span></GroupLabel>
              </Group>

              <Group $w={108}>
                <GroupBody>
                  <Stack>
                    <Row $pad="0 0 0 13px">
                      <Slider type="range" $w={84} defaultValue={0} aria-label="Масштаб" />
                    </Row>
                    <Row $pad="0 0 0 7px" $gap={10}>
                      <Check type="checkbox" aria-label="Закрепить" />
                      <Pic w={14} h={16}>
                        <path d="M4.500 7V4.500c0-3 5-3 5 0V7" stroke="#000" strokeWidth="1.400" />
                        <path d="M2.500 7.500h9v6h-9z" stroke="#000" strokeWidth="1.500" fill="#ddd" />
                        <path d="M7 9v3" stroke="#000" strokeWidth="1.500" />
                      </Pic>
                      <TextBox $w={46} defaultValue="0" aria-label="Значение масштаба" />
                    </Row>
                    <Row as="label" $pad="0 0 0 7px" $gap={8}>
                      <Check type="checkbox" /> Нач. сост
                    </Row>
                  </Stack>
                </GroupBody>
                <GroupLabel><span>Масштаб</span><LauncherButton /></GroupLabel>
              </Group>

              <Group $w={186}>
                <GroupBody $pad={6}>
                  <Stack>
                    <Row $gap={5} $h={21} as="label">Нач <Slider type="range" $w={64} defaultValue={0} /></Row>
                    <Row $pad="0 0 0 28px" $h={20}><TextBox $flat $w={59} readOnly aria-label="Диапазон" /></Row>
                    <Row $gap={5} $h={20} as="label">Кон <Slider type="range" $w={64} defaultValue={0} /></Row>
                  </Stack>
                  <Divider />
                  <Column $w={6} />
                  <StageSteppers>
                    <StageStepper label="Начальный этап" />
                    <StageStepper label="Конечный этап" />
                  </StageSteppers>
                </GroupBody>
                <GroupLabel><span>Диапазон этапов</span></GroupLabel>
              </Group>

              <Group $w={108}>
                <GroupBody>
                  <Stack>
                    <ScaleField label="Макс, %" value="100" />
                    <ScaleField label="Мин,   %" value="0" />
                    <ScaleField label="Кол-во" value="20" />
                  </Stack>
                </GroupBody>
                <GroupLabel><span>Шкала</span></GroupLabel>
              </Group>
            </Groups>
            <Overflow aria-label="Ещё">
              <svg width="4" height="6" viewBox="0 0 4 6" aria-hidden="true"><path d="M0 0l4 3-4 3z" fill="#16498f" /></svg>
            </Overflow>
          </Ribbon>

          <Canvas>
            <PlotTitle>Деформации по оси Y</PlotTitle>
            <ContourPlot />
            <Legend>
              <Swatches>{SCALE_COLORS.map((c) => <Swatch key={c} $c={c} />)}</Swatches>
              <Values>{SCALE_VALUES.map((v) => <li key={v}>{v}</li>)}</Values>
            </Legend>
            <Axes width="66" height="76" viewBox="0 -8 66 76" fill="none" aria-label="Оси X и Y">
              <path d="M8.500 8v51" stroke="#00ff20" />
              <path d="M5 12h7L8.500 2z" fill="#00ff20" />
              <path d="M3 56.500h54" stroke="#f00" />
              <path d="M56 53v7l7-3.500z" fill="#f00" />
              <circle cx="8.500" cy="56.500" r="2.500" fill="#00f" />
              <text x="14" y="14" fill="#00ff20" stroke="#00ff20" strokeWidth=".5">y</text>
              <text x="50" y="51" fill="#f00" stroke="#f00" strokeWidth=".5">X</text>
            </Axes>
          </Canvas>

          <StatusBar>
            <Cell $w={69}>X : -4,809</Cell>
            <Cell $w={70} $pad={7}>Y : 12,366</Cell>
            <Cell $w={32} $pad={3}>
              <StatusButton aria-label="Сетка">
                <Pic><path d="M4.500 1v14M8.500 1v14M12.500 1v14M1 4.500h14M1 8.500h14M1 12.500h14" stroke="#333" /></Pic>
              </StatusButton>
            </Cell>
            <Cell $w={30} $pad={3}>
              <StatusButton aria-label="Привязка">
                <Pic>
                  <path d="M5.500 1v14M11.500 5v10M1 12.500h14M9 7.500h6" stroke="#444" />
                  <path d="M5.500 0v10M0 5.500h11" stroke="#000" strokeWidth="2" />
                </Pic>
              </StatusButton>
            </Cell>
            <Cell $w={100} $pad={7}>Узлов :9125</Cell>
            <Cell $w={100} $pad={7}>Эл-тов :4827</Cell>
            <Cell $w={100} />
            <Cell $w={150} />
            <Cell>
              <Grip width="9" height="9" viewBox="0 0 9 9" aria-hidden="true">
                <path d="M7 1h2v2H7zM4 4h2v2H4zM7 4h2v2H7zM1 7h2v2H1zM4 7h2v2H4zM7 7h2v2H7z" fill="#b5b1af" />
              </Grip>
            </Cell>
          </StatusBar>
        </Client>
      </Frame>
    </>
  );
}
